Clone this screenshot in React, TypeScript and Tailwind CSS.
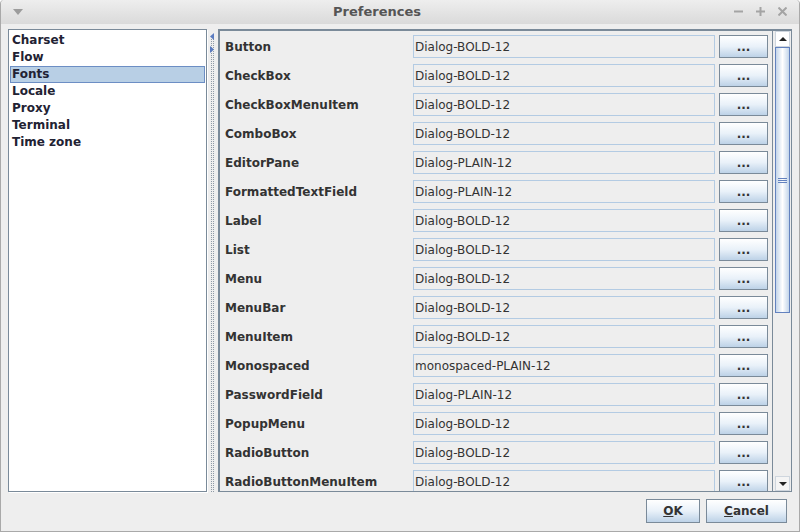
import React from 'react';

const categories = ['Charset', 'Flow', 'Fonts', 'Locale', 'Proxy', 'Terminal', 'Time zone'];

const fonts: [string, string][] = [
  ['Button', 'Dialog-BOLD-12'],
  ['CheckBox', 'Dialog-BOLD-12'],
  ['CheckBoxMenuItem', 'Dialog-BOLD-12'],
  ['ComboBox', 'Dialog-BOLD-12'],
  ['EditorPane', 'Dialog-PLAIN-12'],
  ['FormattedTextField', 'Dialog-PLAIN-12'],
  ['Label', 'Dialog-BOLD-12'],
  ['List', 'Dialog-BOLD-12'],
  ['Menu', 'Dialog-BOLD-12'],
  ['MenuBar', 'Dialog-BOLD-12'],
  ['MenuItem', 'Dialog-BOLD-12'],
  ['Monospaced', 'monospaced-PLAIN-12'],
  ['PasswordField', 'Dialog-PLAIN-12'],
  ['PopupMenu', 'Dialog-BOLD-12'],
  ['RadioButton', 'Dialog-BOLD-12'],
  ['RadioButtonMenuItem', 'Dialog-BOLD-12'],
];

function MetalButton({ children, className }: { children: React.ReactNode; className: string }) {
  return (
    <div
      className={`flex items-center justify-center border border-[#7a8a99] bg-gradient-to-b from-[#ffffff] via-[#e9f1f9] to-[#bdd2e7] text-[12px] font-bold text-[#333333] ${className}`}
    >
      {children}
    </div>
  );
}

function TitleBar() {
  return (
    <div className="relative flex h-[24px] shrink-0 items-center justify-center rounded-t-[4px] bg-gradient-to-b from-[#eeeeee] to-[#dadada] pr-[46px]">
      <svg className="absolute left-[12px] top-[9px]" width="10" height="6" viewBox="0 0 10 6">
        <path d="M0 0 H10 L5 6 Z" fill="#9c9c9c" />
      </svg>
      <span className="text-[13px] font-bold text-[#555555]">Preferences</span>
      <div className="absolute right-[12px] top-[7px] flex items-center gap-[13px]">
        <svg width="9" height="9" viewBox="0 0 9 9">
          <path d="M0 4.5 H9" stroke="#a4a4a4" strokeWidth="2" />
        </svg>
        <svg width="9" height="9" viewBox="0 0 9 9">
          <path d="M0 4.5 H9 M4.5 0 V9" stroke="#a4a4a4" strokeWidth="2" />
        </svg>
        <svg width="9" height="9" viewBox="0 0 9 9">
          <path d="M0.5 0.5 L8.5 8.5 M8.5 0.5 L0.5 8.5" stroke="#a4a4a4" strokeWidth="2" />
        </svg>
      </div>
    </div>
  );
}

function Divider() {
  return (
    <div className="relative flex w-[11px] shrink-0 justify-center">
      <svg className="absolute left-[3px] top-[4px]" width="4" height="7" viewBox="0 0 4 7">
        <path d="M4 0 V7 L0 3.5 Z" fill="#5b7cc0" />
      </svg>
      <svg className="absolute left-[3px] top-[17px]" width="4" height="7" viewBox="0 0 4 7">
        <path d="M0 0 V7 L4 3.5 Z" fill="#5b7cc0" />
      </svg>
      <div className="mt-[10px] w-[3px] border-x border-dotted border-[#8e9aa6]" />
    </div>
  );
}

function Scrollbar() {
  return (
    <div className="flex w-[19px] shrink-0 flex-col border-l border-[#7a8a99] bg-[#eeeeee] pl-[2px] pr-[1px]">
      <div className="flex h-[16px] shrink-0 items-center justify-center border border-[#cfd6de] bg-white">
        <svg width="8" height="4" viewBox="0 0 8 4">
          <path d="M0 4 L4 0 L8 4 Z" fill="#222222" />
        </svg>
      </div>
      <div className="flex h-[266px] shrink-0 flex-col items-center justify-center gap-[1px] border border-[#6382bf] bg-gradient-to-r from-[#c3d5ea] via-[#ffffff] to-[#c3d5ea]">
        <div className="h-[1px] w-[9px] bg-[#6382bf]" />
        <div className="h-[1px] w-[9px] bg-[#6382bf]" />
        <div className="h-[1px] w-[9px] bg-[#6382bf]" />
      </div>
      <div className="flex-1" />
      <div className="flex h-[15px] shrink-0 items-center justify-center border border-[#cfd6de] bg-[#f4f4f4]">
        <svg width="8" height="4" viewBox="0 0 8 4">
          <path d="M0 0 L4 4 L8 0 Z" fill="#222222" />
        </svg>
      </div>
    </div>
  );
}

export default function App() {
  return (
    <div
      className="flex h-[532px] w-[800px] flex-col overflow-hidden rounded-t-[4px] border border-t-0 border-[#a9a9a9] bg-[#eeeeee] text-[#333333]"
      style={{ fontFamily: '"DejaVu Sans", sans-serif' }}
    >
      <TitleBar />
      <div className="flex flex-1 flex-col px-[7px] pt-[5px] pb-[7px]">
        <div className="flex h-[463px] shrink-0">
          <div className="w-[199px] shrink-0 border border-[#7a8a99] bg-white px-[1px] pt-[2px] shadow-[1px_1px_0_#ffffff]">
            {categories.map((c) => (
              <div
                key={c}
                className={`h-[17px] px-[1px] text-[12px] font-bold leading-[15px] text-[#222233] ${
                  c === 'Fonts' ? 'border border-[#6c8ec4] bg-[#b8cfe5]' : 'border border-transparent'
                }`}
              >
                {c}
              </div>
            ))}
          </div>
          <Divider />
          <div className="flex min-w-0 flex-1 border-t-2 border-l-2 border-b border-r border-[#7a8a99]">
            <div className="flex min-w-0 flex-1 flex-col gap-[6px] overflow-hidden pt-[4px] pl-[5px]">
              {fonts.map(([name, value]) => (
                <div key={name} className="flex h-[23px] shrink-0 items-center">
                  <div className="w-[188px] shrink-0 text-[12px] font-bold">{name}</div>
                  <div className="flex h-[23px] w-[302px] shrink-0 items-center border border-[#b3cbe3] pl-[1px] text-[12px]">
                    {value}
                  </div>
                  <MetalButton className="ml-[4px] h-[23px] w-[49px]">
                    <span className="pt-[1px]">...</span>
                  </MetalButton>
                </div>
              ))}
            </div>
            <Scrollbar />
          </div>
        </div>
        <div className="mt-[7px] flex justify-end gap-[6px] pr-[5px]">
          <MetalButton className="h-[24px] w-[54px]">
            <span>
              <span className="underline">O</span>K
            </span>
          </MetalButton>
          <MetalButton className="h-[24px] w-[81px]">
            <span>
              <span className="underline">C</span>ancel
            </span>
          </MetalButton>
        </div>
      </div>
    </div>
  );
}
